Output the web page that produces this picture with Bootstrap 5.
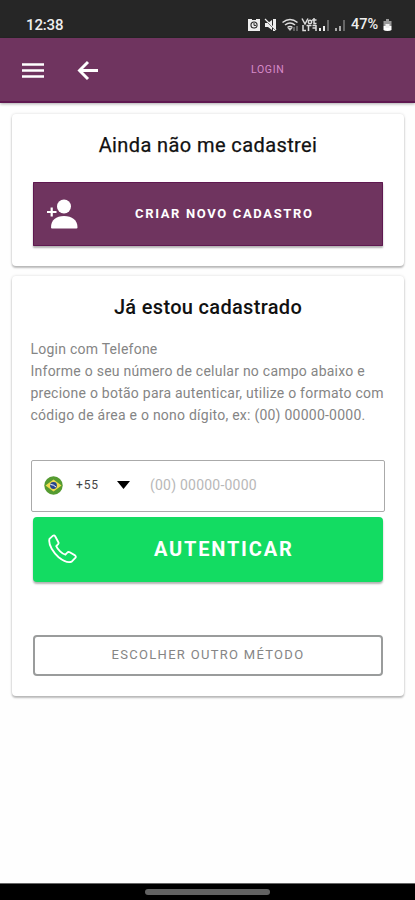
<!DOCTYPE html>
<html lang="pt-BR">
<head>
<meta charset="utf-8">
<meta name="viewport" content="width=device-width, initial-scale=1">
<title>Login</title>
<link href="https://cdn.jsdelivr.net/npm/bootstrap@5.3.0/dist/css/bootstrap.min.css" rel="stylesheet">
<style>
body{font-family:Roboto,"Liberation Sans",sans-serif;height:900px;overflow:hidden;background:#fefefe;color:#111}
svg{display:block;flex:none}
.status-bar{height:38px;background:#262626;color:#eee;padding:11px 23px 0 26px}
.clock{font-size:15px;line-height:28px;letter-spacing:-.15px;font-weight:500}
.battery-text{font-size:14.5px;line-height:28px;font-weight:500;letter-spacing:-.05px;width:28px;margin-left:5px;white-space:nowrap}
.app-bar{height:65px;background:#6f345f;border-bottom:2px solid #5f1850;box-shadow:0 1px 3px #0005;padding:0 22px}
.back-icon{margin-left:33px}
.bar-title{font-size:10.5px;letter-spacing:.65px;color:#d78bc9;margin-left:152px}
.screen{gap:10px;padding:11px 11px 0 12px}
.panel{border:0;border-radius:4px;background:#fff;box-shadow:0 2px 2px #0000003d,0 0 3px #00000026}
.panel-new{height:152px;padding:19px 21px 0}
.panel-login{height:420px;padding:19px 21px 0}
.heading{font-size:20px;line-height:24px;font-weight:500;letter-spacing:.32px}
.heading-new{font-weight:400;letter-spacing:.4px;-webkit-text-stroke:.25px #111}
.action{border:0;padding:0 15px;color:#fff;box-shadow:0 2px 2px #0000004d}
.action:hover{color:#fff}
.action-new{height:64px;margin-top:25px;padding-left:14px;border-radius:1px;background:#6f345f;font-size:13px;font-weight:700;letter-spacing:1.65px;box-shadow:inset 0 0 0 1px #5f1850,0 2px 2px #0000004d}
.action-new span{margin-left:57px}
.action-call{height:65px;margin-top:5px;border-radius:4px;background:#13dc62;font-size:20px;font-weight:700;letter-spacing:1.8px;padding-bottom:2px}
.action-call span{margin-left:77px}
.action-new:hover{background:#6f345f}.action-call:hover{background:#13dc62}
.info{font-size:14px;line-height:22px;letter-spacing:.24px;color:#858585;margin:19px -12px 0 -2.5px;white-space:nowrap}
.phone-box{height:52px;margin:34px -2px 0;border:1px solid #aaa;border-radius:2px;padding:0 0 2px 12px}
.prefix{font-size:12px;letter-spacing:.9px;color:#444;margin-left:13px;width:41px}
.hint{font-size:14px;letter-spacing:.22px;color:#b8b8b8;margin-left:20px}
.action-other{height:41px;margin-top:53px;border:2px solid #9a9c9c;border-radius:4px;font-size:13px;letter-spacing:1.3px;color:#858585;padding:0 0 2px}
.gesture-bar{height:17px;background:#000;border-top:1px solid #666}
.gesture-pill{width:125px;height:6px;background:#626262}
</style>
<script src="https://cdn.jsdelivr.net/npm/bootstrap@5.3.0/dist/js/bootstrap.bundle.min.js"></script>
</head>
<body class="d-flex flex-column">
<header>
<div class="status-bar d-flex align-items-start justify-content-between">
<span class="clock">12:38</span>
<div class="d-flex align-items-center">
<svg width="98" height="14" viewBox="0 0 98 14" fill="#eee">
<!-- alarm clock -->
<path d="M0 1h12v12H0z"/><circle cx="6" cy="7" r="3.6" fill="#262626"/><circle cx="6" cy="7" r="2.5"/><path d="M6 5v2.400h2" stroke="#262626" fill="none"/><path d="M4 0h4v2H4zM5 13h2v1H5z" fill="#262626"/>
<!-- muted speaker -->
<path d="M17 5h3l4-3v10l-4-3h-3zM25 1h3v12h-3z"/><path d="M17 2l11 11" stroke="#262626"/><path d="M17 1l11 11" stroke="#eee" stroke-width="1.300"/>
<!-- wifi -->
<g fill="none" stroke="#ddd" stroke-width="1.600"><path d="M34.500 4.500q7.500-6 15 0M37 7q5-4 10 0M39.500 9.500q2.500-2 5 0"/></g><path d="M39.500 10h5L42 13z" fill="#ccc"/><path d="M46 9v4M49 8v5" stroke="#777" stroke-width="1.500"/>
<!-- VoLTE mark -->
<g fill="none" stroke="#ddd" stroke-width="1.500"><path d="M54 .5L57 6l3-5.500M66 0v5.500h2.500M64 2h4.500M55 7v5.500h3M60.500 7v6M58.500 7.500h5M68 7v6M64.500 7.500H68M64.500 10H68"/><circle cx="62" cy="4" r="1.700"/></g>
<!-- signal levels -->
<path d="M71 13v-3h2v3zM75 13V8h2v5z"/><path d="M79 13V2h2v11z" fill="#666"/><path d="M87 13v-3h2v3zM91 13V8h2v5z" fill="#aaa"/><path d="M95 13V2h2v11z" fill="#666"/>
</svg>
<span class="battery-text">47%</span>
<svg class="ms-1" width="9" height="14" viewBox="0 0 9 14"><path d="M3 1h3v2h2.500v5H.5V3H3z" fill="#999"/><path d="M.5 8h8v4q-1 1-4 1t-4-1z" fill="#fff"/><path d="M2.500 6h4v4h-4z" fill="#eee"/></svg>
</div>
</div>
<nav class="app-bar d-flex align-items-center">
<svg width="22" height="16" viewBox="0 0 22 16" stroke="#fff" stroke-width="2.700"><path d="M0 2.500h22M0 8.500h22M0 14.500h22"/></svg>
<svg class="back-icon" width="22" height="20" viewBox="0 0 22 20" fill="none" stroke="#fff" stroke-width="2.900"><path d="M11 2L2.500 10.500 11 19M2.500 10.500h18.500"/></svg>
<span class="bar-title">LOGIN</span>
</nav>
</header>
<main class="screen flex-grow-1 d-flex flex-column">
<section class="card panel panel-new">
<h1 class="heading heading-new text-center mb-0">Ainda não me cadastrei</h1>
<button class="btn action action-new d-flex align-items-center">
<svg width="31" height="31" viewBox="0 0 31 31" fill="#fff"><circle cx="17" cy="7.500" r="7"/><path d="M4 28.500C4 21 9 17 17 17s13.500 4 13.500 11.500q0 1-1 1H5q-1 0-1-1z"/><path d="M0 13h11M4.500 8v10" stroke="#6f345f" stroke-width="4"/><path d="M0 13h9.500M4.700 8.500v9" stroke="#fff" stroke-width="2.200"/></svg>
<span>CRIAR NOVO CADASTRO</span>
</button>
</section>
<section class="card panel panel-login">
<h2 class="heading text-center mb-0">Já estou cadastrado</h2>
<p class="info mb-0">Login com Telefone<br>Informe o seu número de celular no campo abaixo e<br>precione o botão para autenticar, utilize o formato com<br>código de área e o nono dígito, ex: (00) 00000-0000.</p>
<div class="phone-box d-flex align-items-center">
<svg width="19" height="19" viewBox="0 0 19 19"><circle cx="9.500" cy="9.500" r="9.200" fill="#559b31"/><path d="M1.500 9.500l8-6 8 6-8 6z" fill="#f0dc50"/><circle cx="9.500" cy="9.500" r="3.400" fill="#27458d"/><path d="M6.500 8.500q3 0 5.500 2.500" stroke="#fff" fill="none"/></svg>
<span class="prefix">+55</span>
<svg width="13" height="8" viewBox="0 0 13 8"><path d="M0 0h13L6.500 8z"/></svg>
<span class="hint">(00) 00000-0000</span>
</div>
<button class="btn action action-call d-flex align-items-center">
<svg width="29" height="30" viewBox="0 0 30 30" fill="none" stroke="#fff" stroke-width="1.900" stroke-linejoin="round"><path d="M5.200 1.200L1.500 4.500C0 11 6 19 11 23.500c5 4 10 6 13.500 4.500l4-4c.5-1 .3-1.800-.5-2.400l-5.500-3.200c-1-.5-2-.3-2.700.5l-1.800 2C14.500 20 10 15.500 8.500 12l2-2c.6-.7.6-1.500.1-2.300L7.400 1.800c-.6-1-1.400-1.200-2.200-.6z"/></svg>
<span>AUTENTICAR</span>
</button>
<button class="btn action-other">ESCOLHER OUTRO MÉTODO</button>
</section>
</main>
<footer class="gesture-bar d-flex align-items-center justify-content-center"><div class="gesture-pill rounded-pill"></div></footer>
</body>
</html>
